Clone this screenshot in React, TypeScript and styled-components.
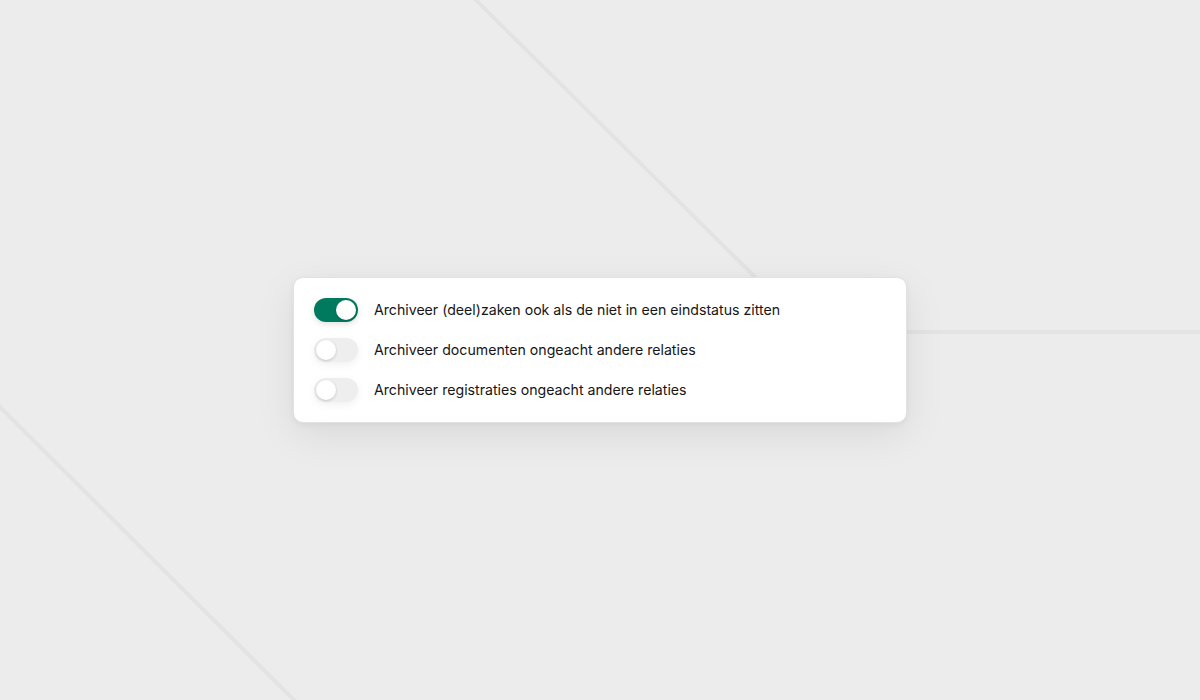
import { useState } from 'react'
import styled, { createGlobalStyle } from 'styled-components'

const GlobalStyle = createGlobalStyle`
  html, body {
    margin: 0;
    padding: 0;
    background: #ececec;
  }
  body {
    font-family: Inter, 'Noto Sans', sans-serif;
  }
`

const Page = styled.main`
  position: relative;
  width: 1200px;
  height: 700px;
  overflow: hidden;
  display: flex;
  align-items: center;
  justify-content: center;
  background: #ececec;
`

const Backdrop = styled.svg`
  position: absolute;
  inset: 0;
  pointer-events: none;
`

const Card = styled.section`
  position: relative;
  width: 614px;
  box-sizing: border-box;
  padding: 20px;
  display: flex;
  flex-direction: column;
  gap: 16px;
  background: #fff;
  border: 1px solid #e2e2e2;
  border-radius: 10px;
  box-shadow: 0 12px 40px rgba(0, 0, 0, 0.08), 0 2px 6px rgba(0, 0, 0, 0.05);
`

const Row = styled.label`
  display: flex;
  align-items: center;
  gap: 16px;
  cursor: pointer;
`

const Track = styled.span<{ $on: boolean }>`
  position: relative;
  flex: none;
  width: 44px;
  height: 24px;
  border-radius: 12px;
  background: ${(p) => (p.$on ? '#007a5e' : '#eeeeee')};
  box-shadow: ${(p) =>
    p.$on ? '0 2px 6px rgba(0, 0, 0, 0.12)' : '0 3px 8px rgba(0, 0, 0, 0.06)'};
`

const Knob = styled.span<{ $on: boolean }>`
  position: absolute;
  top: 2px;
  left: ${(p) => (p.$on ? '22px' : '2px')};
  width: 20px;
  height: 20px;
  border-radius: 50%;
  background: #fff;
  box-shadow: 0 1px 3px rgba(0, 0, 0, 0.18);
`

const Label = styled.span`
  font-size: 14.15px;
  line-height: 24px;
  color: #161616;
`

const options = [
  'Archiveer (deel)zaken ook als de niet in een eindstatus zitten',
  'Archiveer documenten ongeacht andere relaties',
  'Archiveer registraties ongeacht andere relaties',
]

export default function App() {
  const [values, setValues] = useState<boolean[]>([true, false, false])

  const toggle = (i: number) =>
    setValues((v) => v.map((x, j) => (j === i ? !x : x)))

  return (
    <>
      <GlobalStyle />
      <Page>
        <Backdrop width="1200" height="700" viewBox="0 0 1200 700">
          <g stroke="#e3e3e3" strokeWidth="4" fill="none">
            <line x1="474" y1="-2" x2="760" y2="282" />
            <line x1="900" y1="332" x2="1200" y2="332" />
            <line x1="-2" y1="405" x2="296" y2="702" />
          </g>
        </Backdrop>
        <Card>
          {options.map((text, i) => (
            <Row key={text} onClick={() => toggle(i)}>
              <Track $on={values[i]}>
                <Knob $on={values[i]} />
              </Track>
              <Label>{text}</Label>
            </Row>
          ))}
        </Card>
      </Page>
    </>
  )
}
